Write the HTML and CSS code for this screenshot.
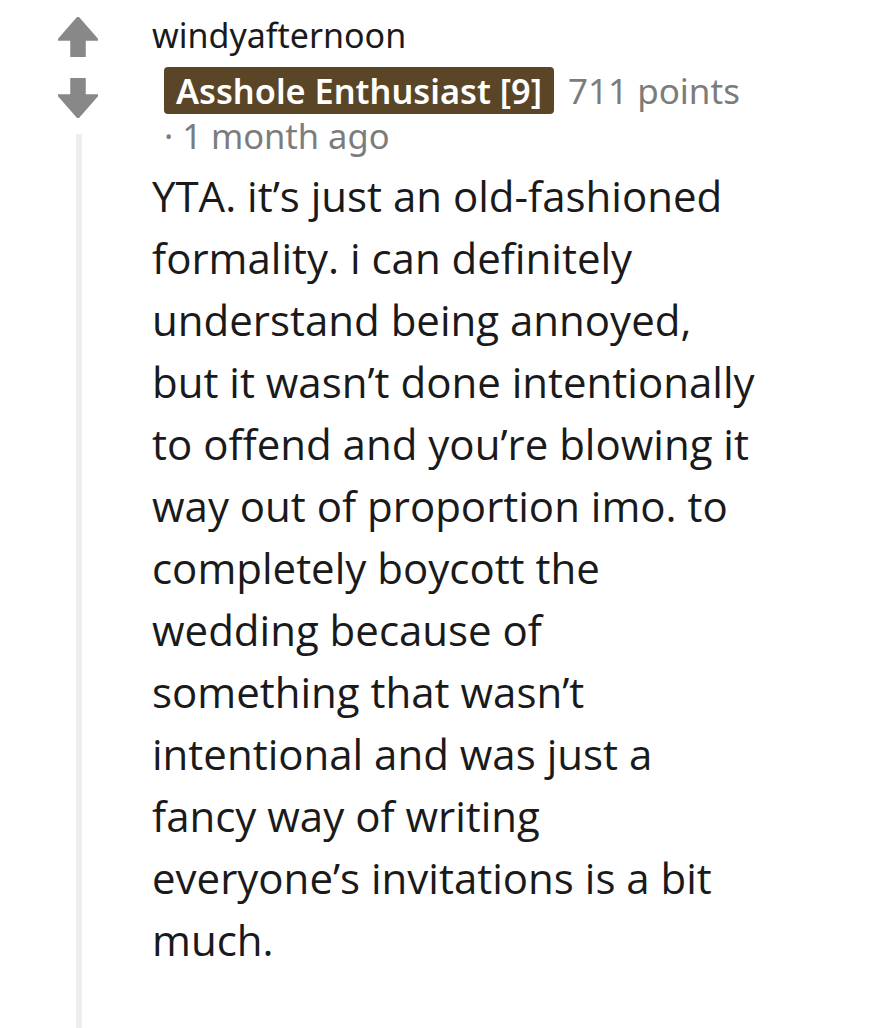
FILE: index.html
```html
<!DOCTYPE html>
<html>
<head>
<meta charset="utf-8">
<link rel="stylesheet" href="styles.css">
</head>
<body>
<div class="comment">
  <div class="rail">
    <div class="votes">
      <svg class="arrow" viewBox="0 0 40 40" width="40" height="40"><path d="M20 0 L40 23 L27 23 L27 40 L13 40 L13 23 L0 23 Z" fill="#888" stroke="#888" stroke-width="1.5" stroke-linejoin="round"/></svg>
      <svg class="arrow" viewBox="0 0 40 40" width="40" height="40"><path d="M13 0 L27 0 L27 17 L40 17 L20 40 L0 17 L13 17 Z" fill="#888" stroke="#888" stroke-width="1.5" stroke-linejoin="round"/></svg>
    </div>
    <div class="thread-line"></div>
  </div>
  <div class="main">
    <div class="author">windyafternoon</div>
    <div class="meta">
      <span class="flair">Asshole Enthusiast [9]</span>
      <span class="points">711 points</span>
    </div>
    <div class="time">· 1 month ago</div>
    <p class="body">YTA. it’s just an old-fashioned<br>formality. i can definitely<br>understand being annoyed,<br>but it wasn’t done intentionally<br>to offend and you’re blowing it<br>way out of proportion imo. to<br>completely boycott the<br>wedding because of<br>something that wasn’t<br>intentional and was just a<br>fancy way of writing<br>everyone’s invitations is a bit<br>much.</p>
  </div>
</div>
</body>
</html>
```

FILE: styles.css
```css
html, body {
  margin: 0;
  padding: 0;
  background: #fff;
}
.comment {
  display: flex;
  height: 1028px;
}
.rail {
  width: 152px;
  display: flex;
  flex-direction: column;
  align-items: flex-start;
  padding-left: 58px;
  box-sizing: border-box;
}
.votes {
  display: flex;
  flex-direction: column;
  gap: 21px;
  padding-top: 17px;
}
.arrow {
  display: block;
}
.thread-line {
  width: 6px;
  margin-left: 18px;
  margin-top: 16px;
  flex: 1;
  background: #edeef0;
}
.main {
  width: 700px;
  font-family: "Noto Sans", "Open Sans", sans-serif;
}
.author {
  font-size: 34px;
  line-height: 40px;
  color: #1a1a1b;
  margin-top: 15px;
}
.meta {
  display: flex;
  align-items: center;
  margin-top: 12px;
  padding-left: 12px;
}
.flair {
  background: #5a4527;
  color: #fff;
  font-family: "Noto Sans", "Open Sans", sans-serif;
  font-weight: 600;
  font-size: 34.3px;
  line-height: 47px;
  padding: 0 12px;
  border-radius: 4px;
}
.points {
  color: #7c7c7c;
  font-size: 35px;
  margin-left: 14px;
}
.time {
  padding-left: 12px;
  color: #7c7c7c;
  font-size: 34.5px;
  line-height: 44px;
}
.body {
  margin: 7px 0 0;
  font-family: "Open Sans", "Noto Sans", sans-serif;
  font-size: 42px;
  line-height: 62px;
  color: #1a1a1b;
}
```
